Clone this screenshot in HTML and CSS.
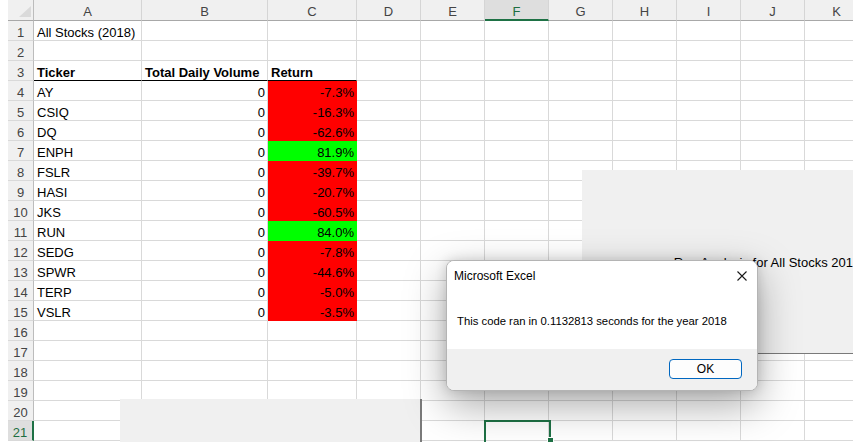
FILE: index.html
```html
<!DOCTYPE html>
<html>
<head>
<meta charset="utf-8">
<link rel="stylesheet" href="styles.css">
</head>
<body>
<div class="app">
  <div class="sheet">
    <div class="row head">
      <div class="rh corner"><span class="tri"></span></div>
      <div class="ch">A</div><div class="ch">B</div><div class="ch">C</div><div class="ch">D</div><div class="ch">E</div><div class="ch sel">F</div><div class="ch">G</div><div class="ch">H</div><div class="ch">I</div><div class="ch">J</div><div class="ch">K</div>
    </div>
    <div class="row"><div class="rh">1</div><div class="c">All Stocks (2018)</div><div class="c"></div><div class="c"></div><div class="c"></div><div class="c"></div><div class="c"></div><div class="c"></div><div class="c"></div><div class="c"></div><div class="c"></div><div class="c"></div></div>
    <div class="row"><div class="rh">2</div><div class="c"></div><div class="c"></div><div class="c"></div><div class="c"></div><div class="c"></div><div class="c"></div><div class="c"></div><div class="c"></div><div class="c"></div><div class="c"></div><div class="c"></div></div>
    <div class="row"><div class="rh">3</div><div class="c b ul">Ticker</div><div class="c b ul">Total Daily Volume</div><div class="c b ul">Return</div><div class="c"></div><div class="c"></div><div class="c"></div><div class="c"></div><div class="c"></div><div class="c"></div><div class="c"></div><div class="c"></div></div>
    <div class="row"><div class="rh">4</div><div class="c">AY</div><div class="c num">0</div><div class="c num red">-7.3%</div><div class="c"></div><div class="c"></div><div class="c"></div><div class="c"></div><div class="c"></div><div class="c"></div><div class="c"></div><div class="c"></div></div>
    <div class="row"><div class="rh">5</div><div class="c">CSIQ</div><div class="c num">0</div><div class="c num red">-16.3%</div><div class="c"></div><div class="c"></div><div class="c"></div><div class="c"></div><div class="c"></div><div class="c"></div><div class="c"></div><div class="c"></div></div>
    <div class="row"><div class="rh">6</div><div class="c">DQ</div><div class="c num">0</div><div class="c num red">-62.6%</div><div class="c"></div><div class="c"></div><div class="c"></div><div class="c"></div><div class="c"></div><div class="c"></div><div class="c"></div><div class="c"></div></div>
    <div class="row"><div class="rh">7</div><div class="c">ENPH</div><div class="c num">0</div><div class="c num green">81.9%</div><div class="c"></div><div class="c"></div><div class="c"></div><div class="c"></div><div class="c"></div><div class="c"></div><div class="c"></div><div class="c"></div></div>
    <div class="row"><div class="rh">8</div><div class="c">FSLR</div><div class="c num">0</div><div class="c num red">-39.7%</div><div class="c"></div><div class="c"></div><div class="c"></div><div class="c"></div><div class="c"></div><div class="c"></div><div class="c"></div><div class="c"></div></div>
    <div class="row"><div class="rh">9</div><div class="c">HASI</div><div class="c num">0</div><div class="c num red">-20.7%</div><div class="c"></div><div class="c"></div><div class="c"></div><div class="c"></div><div class="c"></div><div class="c"></div><div class="c"></div><div class="c"></div></div>
    <div class="row"><div class="rh">10</div><div class="c">JKS</div><div class="c num">0</div><div class="c num red">-60.5%</div><div class="c"></div><div class="c"></div><div class="c"></div><div class="c"></div><div class="c"></div><div class="c"></div><div class="c"></div><div class="c"></div></div>
    <div class="row"><div class="rh">11</div><div class="c">RUN</div><div class="c num">0</div><div class="c num green">84.0%</div><div class="c"></div><div class="c"></div><div class="c"></div><div class="c"></div><div class="c"></div><div class="c"></div><div class="c"></div><div class="c"></div></div>
    <div class="row"><div class="rh">12</div><div class="c">SEDG</div><div class="c num">0</div><div class="c num red">-7.8%</div><div class="c"></div><div class="c"></div><div class="c"></div><div class="c"></div><div class="c"></div><div class="c"></div><div class="c"></div><div class="c"></div></div>
    <div class="row"><div class="rh">13</div><div class="c">SPWR</div><div class="c num">0</div><div class="c num red">-44.6%</div><div class="c"></div><div class="c"></div><div class="c"></div><div class="c"></div><div class="c"></div><div class="c"></div><div class="c"></div><div class="c"></div></div>
    <div class="row"><div class="rh">14</div><div class="c">TERP</div><div class="c num">0</div><div class="c num red">-5.0%</div><div class="c"></div><div class="c"></div><div class="c"></div><div class="c"></div><div class="c"></div><div class="c"></div><div class="c"></div><div class="c"></div></div>
    <div class="row"><div class="rh">15</div><div class="c">VSLR</div><div class="c num">0</div><div class="c num red">-3.5%</div><div class="c"></div><div class="c"></div><div class="c"></div><div class="c"></div><div class="c"></div><div class="c"></div><div class="c"></div><div class="c"></div></div>
    <div class="row"><div class="rh">16</div><div class="c"></div><div class="c"></div><div class="c"></div><div class="c"></div><div class="c"></div><div class="c"></div><div class="c"></div><div class="c"></div><div class="c"></div><div class="c"></div><div class="c"></div></div>
    <div class="row"><div class="rh">17</div><div class="c"></div><div class="c"></div><div class="c"></div><div class="c"></div><div class="c"></div><div class="c"></div><div class="c"></div><div class="c"></div><div class="c"></div><div class="c"></div><div class="c"></div></div>
    <div class="row"><div class="rh">18</div><div class="c"></div><div class="c"></div><div class="c"></div><div class="c"></div><div class="c"></div><div class="c"></div><div class="c"></div><div class="c"></div><div class="c"></div><div class="c"></div><div class="c"></div></div>
    <div class="row"><div class="rh">19</div><div class="c"></div><div class="c"></div><div class="c"></div><div class="c"></div><div class="c"></div><div class="c"></div><div class="c"></div><div class="c"></div><div class="c"></div><div class="c"></div><div class="c"></div></div>
    <div class="row"><div class="rh">20</div><div class="c"></div><div class="c"></div><div class="c"></div><div class="c"></div><div class="c"></div><div class="c"></div><div class="c"></div><div class="c"></div><div class="c"></div><div class="c"></div><div class="c"></div></div>
    <div class="row"><div class="rh sel">21</div><div class="c"></div><div class="c"></div><div class="c"></div><div class="c"></div><div class="c"></div><div class="c"></div><div class="c"></div><div class="c"></div><div class="c"></div><div class="c"></div><div class="c"></div></div>
  </div>

  <div class="selection"><span class="handle"></span></div>

  <div class="form-button">Run Analysis for All Stocks 2018</div>
  <div class="form-bottom"></div>

  <div class="dialog">
    <div class="dlg-body">
      <div class="dlg-title">
        <span>Microsoft Excel</span>
        <svg class="close" width="10" height="10" viewBox="0 0 10 10"><path d="M0.5 0.5 L9.5 9.5 M9.5 0.5 L0.5 9.5" stroke="#1a1a1a" stroke-width="1.1" fill="none"/></svg>
      </div>
      <div class="dlg-msg">This code ran in 0.1132813 seconds for the year 2018</div>
    </div>
    <div class="dlg-foot">
      <button class="ok">OK</button>
    </div>
  </div>
</div>
</body>
</html>
```
FILE: styles.css
```css
html, body {
  margin: 0;
  padding: 0;
  background: #ffffff;
  overflow: hidden;
}
.app {
  position: relative;
  width: 853px;
  height: 442px;
  overflow: hidden;
  font-family: "Liberation Sans", Arial, sans-serif;
  font-size: 13px;
  color: #000;
}
.sheet {
  display: flex;
  flex-direction: column;
  padding-left: 8px;
}
.row {
  display: grid;
  grid-template-columns: 26px 108px 126px 89px repeat(8, 64px);
  height: 20px;
}
.row.head {
  height: 21px;
}
.c {
  box-sizing: border-box;
  height: 20px;
  border-right: 1px solid #d9d9d9;
  border-bottom: 1px solid #d9d9d9;
  padding: 3px 3px 0 3px;
  line-height: 18px;
  white-space: nowrap;
}
.c.b { font-weight: bold; }
.c.ul { border-bottom-color: #000; }
.c.num { text-align: right; padding-right: 2px; }
.c.red { background: #ff0000; border-color: #ff0000; }
.c.green { background: #00ff00; border-color: #00ff00; }
.rh {
  box-sizing: border-box;
  height: 20px;
  background: #f0f0f0;
  border-right: 1px solid #bcbcbc;
  border-bottom: 1px solid #d9d9d9;
  color: #444;
  text-align: center;
  padding-top: 3px;
  line-height: 18px;
}
.rh.sel {
  background: #dedede;
  border-right: 2px solid #1e7145;
  color: #1e6e42;
}
.rh.corner {
  height: 21px;
  position: relative;
  border-bottom: 1px solid #a8a8a8;
}
.tri {
  position: absolute;
  right: 2px;
  bottom: 3px;
  width: 0;
  height: 0;
  border-left: 12px solid transparent;
  border-bottom: 11px solid #dadada;
}
.ch {
  box-sizing: border-box;
  height: 21px;
  background: #f0f0f0;
  border-right: 1px solid #d5d5d5;
  border-bottom: 1px solid #a8a8a8;
  color: #444;
  text-align: center;
  padding-top: 2px;
  line-height: 19px;
}
.ch.sel {
  background: #dedede;
  border-bottom: 2px solid #1e7145;
  color: #1e6e42;
}
.selection {
  position: absolute;
  left: 484px;
  top: 420px;
  width: 63px;
  height: 24px;
  border: 2px solid #1e7145;
}
.handle {
  position: absolute;
  right: -5px;
  bottom: 2px;
  width: 5px;
  height: 5px;
  background: #1e7145;
  border: 1px solid #fff;
}
.form-button {
  position: absolute;
  left: 582px;
  top: 170px;
  width: 370px;
  height: 184px;
  background: #f0f0f0;
  border-bottom: 1px solid #7a7a7a;
  display: flex;
  align-items: center;
  justify-content: center;
  white-space: nowrap;
  padding-top: 2px;
  box-sizing: border-box;
}
.form-bottom {
  position: absolute;
  left: 120px;
  top: 399px;
  width: 300px;
  height: 50px;
  background: #f0f0f0;
  border-right: 2px solid #7a7a7a;
}
.dialog {
  position: absolute;
  left: 446px;
  top: 260px;
  width: 312px;
  height: 131px;
  box-sizing: border-box;
  border: 1px solid #b4b4b4;
  border-radius: 8px;
  overflow: hidden;
  background: #fff;
  box-shadow: 0 14px 40px rgba(0, 0, 0, 0.34), 0 0 12px rgba(0, 0, 0, 0.14);
  display: flex;
  flex-direction: column;
  font-family: "Liberation Sans", Arial, sans-serif;
}
.dlg-body {
  height: 88px;
  background: #fff;
}
.dlg-title {
  display: flex;
  align-items: center;
  justify-content: space-between;
  height: 29px;
  padding: 0 10px 0 7px;
  font-size: 12px;
  color: #000;
}
.dlg-msg {
  margin-top: 23px;
  padding-left: 10px;
  font-size: 11.3px;
  line-height: 16px;
  color: #000;
  white-space: nowrap;
}
.dlg-foot {
  flex: 1;
  background: #f0f0f0;
  display: flex;
  justify-content: flex-end;
  align-items: flex-start;
  padding: 10px 15px 0 0;
}
.ok {
  width: 73px;
  height: 20px;
  box-sizing: border-box;
  border: 1px solid #0067c0;
  border-radius: 4px;
  background: #fdfdfd;
  font-family: "Liberation Sans", Arial, sans-serif;
  font-size: 12px;
  color: #000;
  padding: 0;
  line-height: 18px;
}
```
